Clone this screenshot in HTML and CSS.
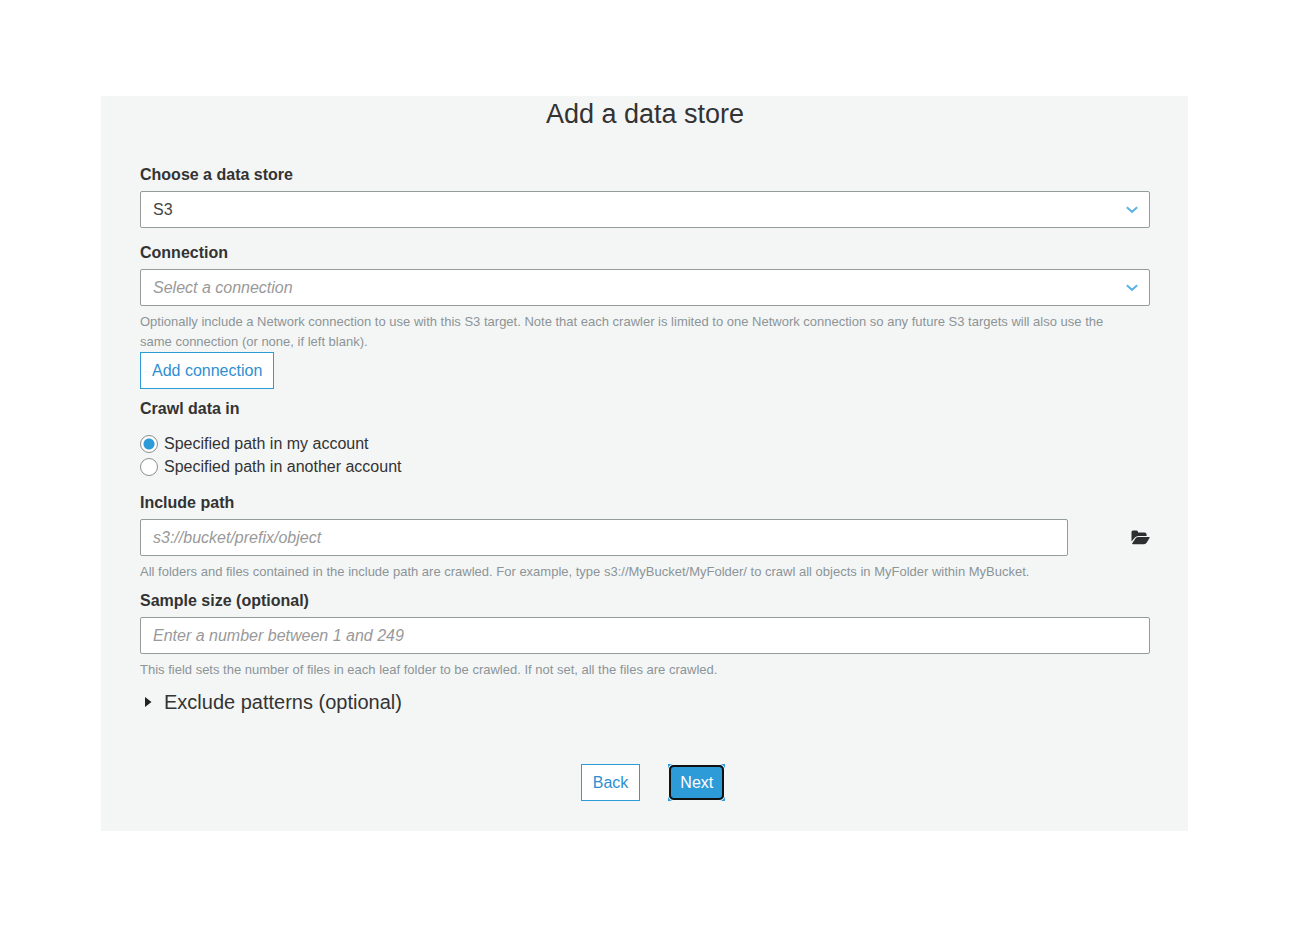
FILE: index.html
```html
<!DOCTYPE html>
<html lang="en">
<head>
<meta charset="utf-8">
<title>Add a data store</title>
<link rel="stylesheet" href="styles.css">
</head>
<body>
<main class="panel">
  <h1 class="title">Add a data store</h1>
  <form class="form">
    <div class="field">
      <label class="label" for="store">Choose a data store</label>
      <div class="select-wrap">
        <select class="control" id="store"><option>S3</option></select>
        <svg class="chevron" viewBox="0 0 12 8" aria-hidden="true"><path d="M.8 1.2 6 5.8 11.2 1.2"/></svg>
      </div>
    </div>
    <div class="field field-spaced">
      <label class="label" for="connection">Connection</label>
      <div class="select-wrap">
        <select class="control control-empty" id="connection"><option value="">Select a connection</option></select>
        <svg class="chevron" viewBox="0 0 12 8" aria-hidden="true"><path d="M.8 1.2 6 5.8 11.2 1.2"/></svg>
      </div>
      <p class="help">Optionally include a Network connection to use with this S3 target. Note that each crawler is limited to one Network connection so any future S3 targets will also use the same connection (or none, if left blank).</p>
      <button class="button" type="button">Add connection</button>
    </div>
    <fieldset class="choices">
      <legend class="label">Crawl data in</legend>
      <label class="choice"><input class="radio" type="radio" name="account" checked>Specified path in my account</label>
      <label class="choice"><input class="radio" type="radio" name="account">Specified path in another account</label>
    </fieldset>
    <div class="field field-spaced">
      <label class="label" for="path">Include path</label>
      <div class="path-row">
        <input class="control" id="path" type="text" placeholder="s3://bucket/prefix/object">
        <button class="browse" type="button" aria-label="Browse folders">
          <svg class="folder" viewBox="0 0 19 15" aria-hidden="true"><path d="M.5 11.5V2Q.5 .5 2 .5H5.5Q7 .5 7.2 2.4H13.5Q15.6 2.4 15.6 4.4V5.9H7.5Q5.2 5.9 3.9 7.5Z"/><path d="M1.3 13.2 4.6 8.3Q5.6 6.9 7.4 6.9H18Q19.2 6.9 18.5 8.1L15.8 12.5Q14.8 14.2 13 14.2H2Q.7 14.2 1.3 13.2Z"/></svg>
        </button>
      </div>
      <p class="help">All folders and files contained in the include path are crawled. For example, type s3://MyBucket/MyFolder/ to crawl all objects in MyFolder within MyBucket.</p>
    </div>
    <div class="field field-close">
      <label class="label" for="sample">Sample size (optional)</label>
      <input class="control" id="sample" type="text" placeholder="Enter a number between 1 and 249">
      <p class="help">This field sets the number of files in each leaf folder to be crawled. If not set, all the files are crawled.</p>
    </div>
    <details class="exclude">
      <summary class="summary"><svg class="caret" viewBox="0 0 7 12" aria-hidden="true"><path d="M0 1 6.5 6 0 11Z"/></svg>Exclude patterns (optional)</summary>
    </details>
    <div class="actions">
      <button class="button" type="button">Back</button>
      <button class="button button-primary" type="submit">Next</button>
    </div>
  </form>
</main>
</body>
</html>
```
FILE: styles.css
```css
* { box-sizing: border-box; }

body {
  margin: 0;
  padding: 96px 102px 96px 101px;
  background: #fff;
  color: #333;
  font: 16px/20px "Liberation Sans", Arial, sans-serif;
}

.panel {
  padding: 0 38px 30px 39px;
  background: #f4f6f6;
}

.title {
  margin: 0 0 33px;
  font-size: 27px;
  font-weight: 400;
  line-height: 36px;
  text-align: center;
}

.field { display: flex; flex-direction: column; align-items: stretch; }
.field-spaced { margin-top: 15px; }
.field-close { margin-top: 9px; }

.label {
  display: block;
  margin-bottom: 6px;
  padding: 0;
  font-weight: 700;
}

.control {
  display: block;
  width: 100%;
  height: 37px;
  margin: 0;
  padding: 0 12px;
  border: 1px solid #949b9d;
  border-radius: 2px;
  background: #fff;
  color: #444;
  font: inherit;
  appearance: none;
}

.control::placeholder { color: #999; font-style: italic; opacity: 1; }
.control-empty { color: #999; font-style: italic; }

.select-wrap { position: relative; }

.chevron {
  position: absolute;
  top: 15px;
  right: 12px;
  width: 12px;
  height: 8px;
  fill: none;
  stroke: #5db2e4;
  stroke-width: 2;
  pointer-events: none;
}

.help {
  margin: 6px 0 0;
  padding-right: 12px;
  color: #8c9496;
  font-size: 13px;
}

.button {
  align-self: flex-start;
  height: 37px;
  padding: 0 11px;
  border: 1px solid #2e9bd9;
  background: #fff;
  color: #2e8fd0;
  font: inherit;
}

.choices { margin: 10px 0 0; padding: 0; border: 0; }
.choices .label { margin-bottom: 13px; }

.choice {
  display: flex;
  align-items: center;
  gap: 6px;
  line-height: 23px;
}

.radio {
  width: 18px;
  height: 18px;
  margin: 0;
  border: 1px solid #8b8f90;
  border-radius: 50%;
  background: #fff;
  appearance: none;
}

.radio:checked {
  background: radial-gradient(circle, #2e9bd9 5px, #fff 6px);
}

.path-row { display: flex; }
.path-row .control { flex: 1; }

.browse {
  display: flex;
  align-items: center;
  justify-content: flex-end;
  width: 82px;
  padding: 0;
  border: 0;
  background: none;
}

.folder { width: 19px; height: 15px; fill: #2c3030; }

.exclude { margin-top: 10px; }

.summary {
  display: flex;
  align-items: center;
  gap: 12px;
  padding-left: 5px;
  font-size: 20px;
  line-height: 24px;
  list-style: none;
}

.caret { width: 7px; height: 12px; fill: #222; }

.actions {
  display: flex;
  justify-content: center;
  gap: 28px;
  margin: 50px 0 0 16px;
}

.button-primary {
  position: relative;
  background: #2e9bd9;
  color: #fff;
}

/* Focus ring drawn inside the square button corners */
.button-primary::before,
.button-primary::after {
  content: "";
  position: absolute;
  inset: -1px;
  border: 1px solid #f4f6f6;
  border-radius: 5px;
}

.button-primary::after {
  inset: 0;
  border: 2px solid #111;
}
```
